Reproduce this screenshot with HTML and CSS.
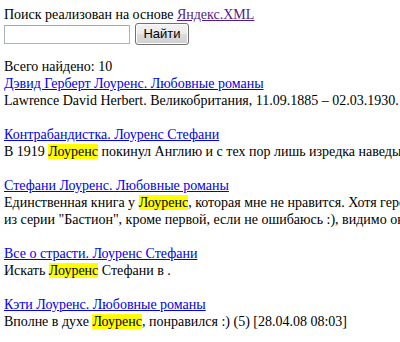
FILE: index.html
```html
<!DOCTYPE html>
<html lang="ru">
<head>
<meta charset="utf-8">
<title>Поиск</title>
<link rel="stylesheet" href="styles.css">
</head>
<body>
<div class="page">
  <div class="intro">Поиск реализован на основе <a class="visited" href="#xml">Яндекс.XML</a></div>
  <form class="search" action="#">
    <input class="search-input" type="text" name="q">
    <button class="search-btn" type="submit">Найти</button>
  </form>
  <div class="total">Всего найдено: 10</div>
  <div class="results">
    <div class="result">
      <a class="title" href="#r1">Дэвид Герберт Лоуренс. Любовные романы</a>
      <div class="snippet">Lawrence David Herbert. Великобритания, 11.09.1885 – 02.03.1930. Родился в семье шахтёра в Иствуде.</div>
    </div>
    <div class="result">
      <a class="title" href="#r2">Контрабандистка. Лоуренс Стефани</a>
      <div class="snippet">В 1919 <span class="hl">Лоуренс</span> покинул Англию и с тех пор лишь изредка наведывался на родину.</div>
    </div>
    <div class="result">
      <a class="title" href="#r3">Стефани Лоуренс. Любовные романы</a>
      <div class="snippet">Единственная книга у <span class="hl">Лоуренс</span>, которая мне не нравится. Хотя героиня неплохая, как и во всех книгах<br>из серии "Бастион", кроме первой, если не ошибаюсь :), видимо они все такие.</div>
    </div>
    <div class="result">
      <a class="title" href="#r4">Все о страсти. Лоуренс Стефани</a>
      <div class="snippet">Искать <span class="hl">Лоуренс</span> Стефани в .</div>
    </div>
    <div class="result">
      <a class="title" href="#r5">Кэти Лоуренс. Любовные романы</a>
      <div class="snippet">Вполне в духе <span class="hl">Лоуренс</span>, понравился :) (5) [28.04.08 08:03]</div>
    </div>
  </div>
</div>
</body>
</html>
```
FILE: styles.css
```css
html, body {
  overflow: hidden;
}
body {
  margin: 6px 0 0 4px;
  background: #fff;
  color: #000;
  font-family: "Liberation Serif", "Times New Roman", serif;
  font-size: 14px;
  line-height: 17px;
}
.page {
  width: 900px;
}
a {
  color: #0000ee;
  text-decoration: underline;
}
a.visited {
  color: #551a8b;
}
.search {
  display: flex;
  align-items: center;
  gap: 5px;
  margin: 0 0 13px 0;
  height: 22px;
}
.search-input {
  box-sizing: border-box;
  width: 126px;
  height: 19px;
  margin: 0;
  padding: 1px 2px;
  border: 1px solid #abb3bd;
  border-top-color: #a0a8b2;
  background: #fff;
  font-size: 13px;
}
.search-btn {
  box-sizing: border-box;
  width: 54px;
  height: 22px;
  margin: 0;
  padding: 0 0 1px 0;
  border: 1px solid #707070;
  border-radius: 3px;
  background: linear-gradient(#f2f2f2 0%, #ebebeb 48%, #dddddd 52%, #cfcfcf 100%);
  color: #000;
  font-family: "Liberation Sans", Arial, sans-serif;
  font-size: 13px;
  line-height: 18px;
  box-shadow: inset 0 0 0 1px #fcfcfc;
}
.result {
  margin-bottom: 17px;
}
.snippet {
  white-space: nowrap;
}
.hl {
  background: #ffff00;
}
```
